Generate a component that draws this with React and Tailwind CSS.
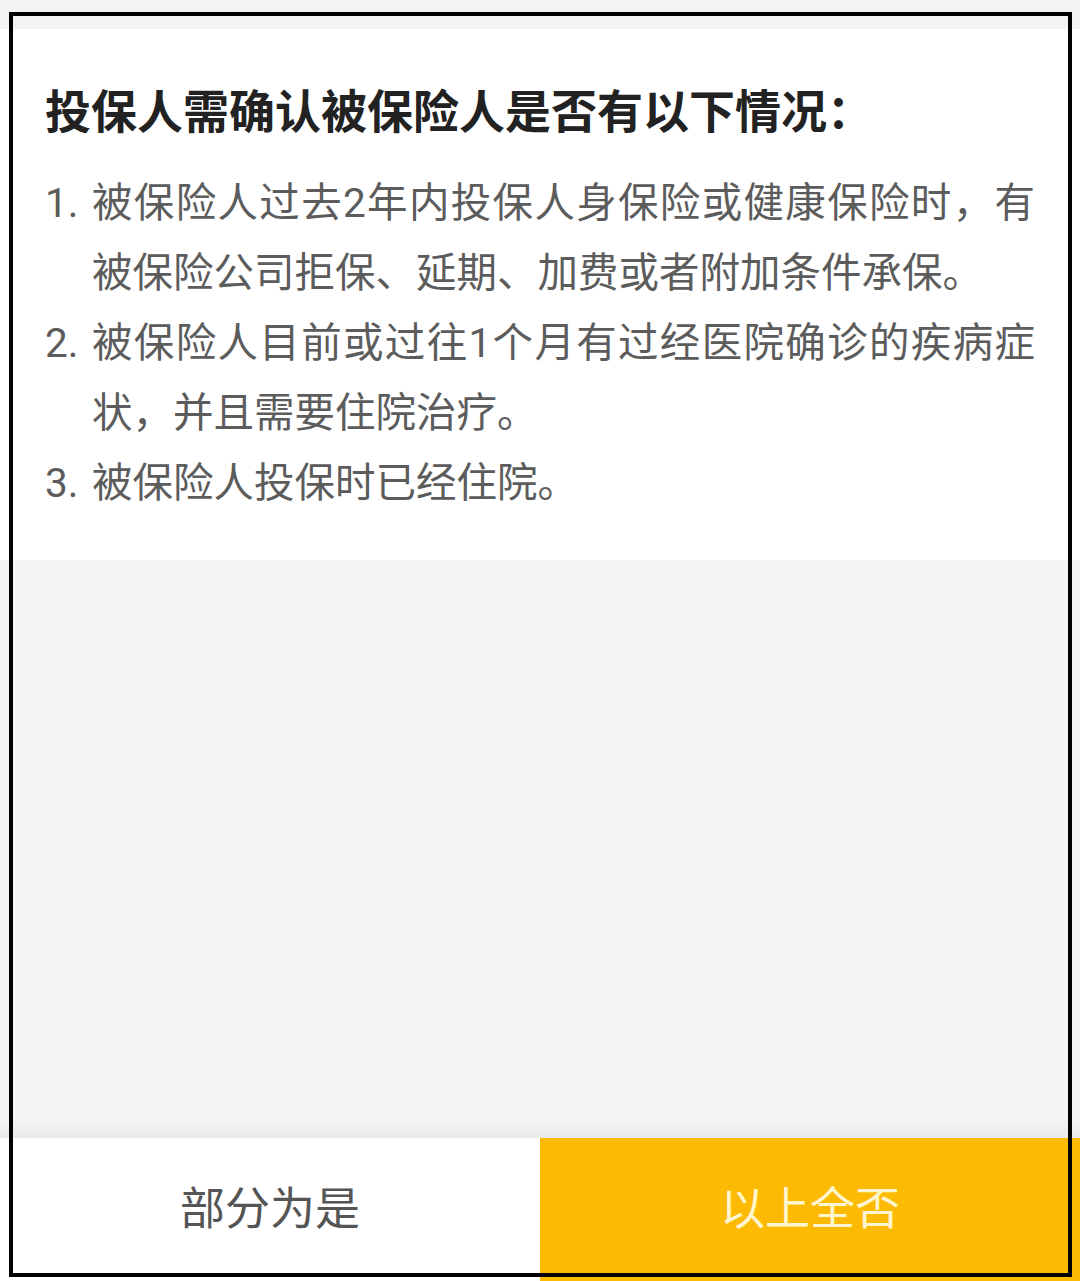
export default function App() {
  const items = [
    '被保险人过去2年内投保人身保险或健康保险时，有被保险公司拒保、延期、加费或者附加条件承保。',
    '被保险人目前或过往1个月有过经医院确诊的疾病症状，并且需要住院治疗。',
    '被保险人投保时已经住院。',
  ];

  return (
    <div
      className="relative w-[1080px] h-[1281px] overflow-hidden flex flex-col bg-[#f5f5f5]"
      style={{ fontFamily: 'Roboto, "Noto Sans CJK SC", sans-serif' }}
    >
      <div className="h-[29px] bg-[#f4f4f4]" />

      <div className="bg-white pt-[53px] pb-[42px] pl-[45px] pr-[45px]">
        <h1 className="text-[46px] leading-[60px] font-bold text-[#222]">
          投保人需确认被保险人是否有以下情况：
        </h1>
        <ol className="mt-[26px]">
          {items.map((t, i) => (
            <li key={i} className="flex text-[40.5px] leading-[70px] text-[#5c5c5c]">
              <span className="w-[47px] shrink-0">{i + 1}.</span>
              <span className="flex-1 text-justify">{t}</span>
            </li>
          ))}
        </ol>
      </div>

      <div className="flex-1 bg-[#f5f5f5]" />
      <div className="h-[22px] bg-gradient-to-b from-[#f5f5f5] to-[#ebebeb]" />

      <div className="h-[143px] flex">
        <button className="w-1/2 bg-white text-[45px] text-[#555] flex items-center justify-center">
          部分为是
        </button>
        <button className="w-1/2 bg-[#fdba02] text-[45px] text-[#fff6cf] flex items-center justify-center">
          以上全否
        </button>
      </div>

      <div className="absolute left-[9px] top-[12px] w-[1063px] h-[1265px] border-4 border-black pointer-events-none" />
    </div>
  );
}
